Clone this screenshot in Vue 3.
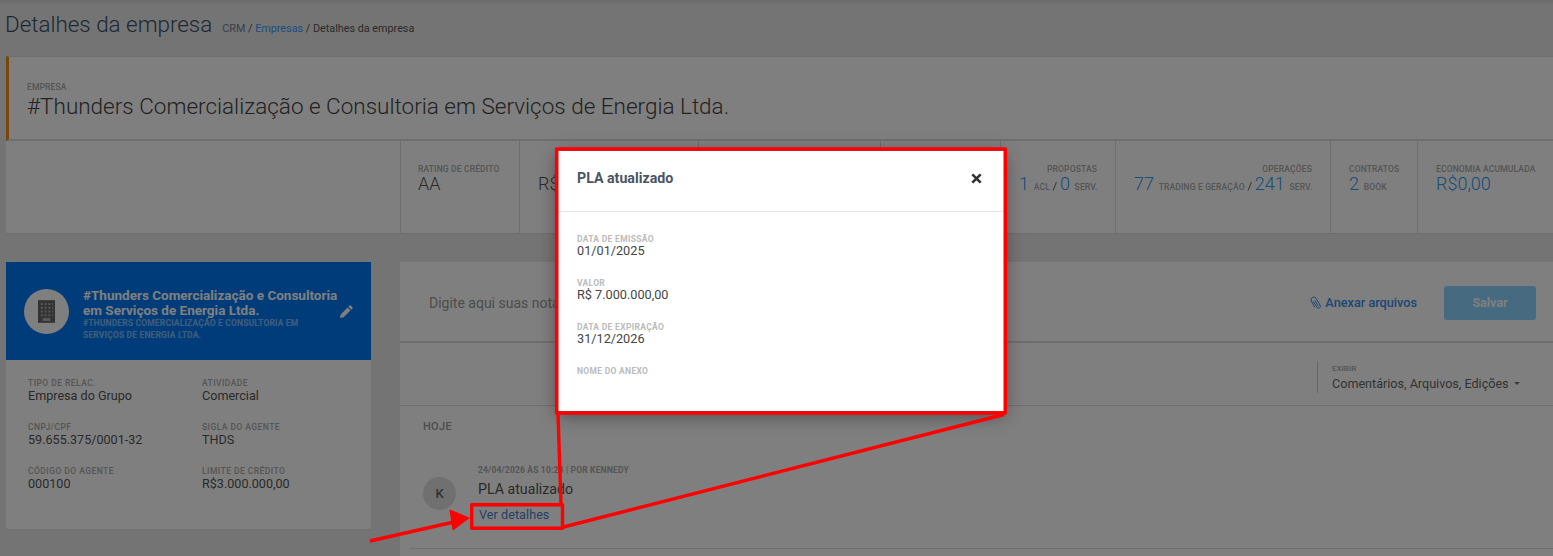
<script setup>
const sideFields = [
  ['TIPO DE RELAC.', 'Empresa do Grupo'], ['ATIVIDADE', 'Comercial'],
  ['CNPJ/CPF', '59.655.375/0001-32'], ['SIGLA DO AGENTE', 'THDS'],
  ['CÓDIGO DO AGENTE', '000100'], ['LIMITE DE CRÉDITO', 'R$3.000.000,00'],
]
const modalFields = [
  ['DATA DE EMISSÃO', '01/01/2025'], ['VALOR', 'R$ 7.000.000,00'],
  ['DATA DE EXPIRAÇÃO', '31/12/2026'], ['NOME DO ANEXO', ''],
]
</script>

<template>
  <div class="page">
    <header class="head">
      <h1>Detalhes da empresa</h1>
      <nav class="crumbs"><span class="c1">CRM</span> / <a>Empresas</a> / Detalhes da empresa</nav>
    </header>

    <section class="company">
      <div class="lbl">EMPRESA</div>
      <div class="cname">#Thunders Comercialização e Consultoria em Serviços de Energia Ltda.</div>
    </section>

    <section class="stats">
      <div class="cell c-rating"><div class="lbl">RATING DE CRÉDITO</div><div class="big">AA</div></div>
      <div class="cell c-limit"><div class="lbl">&nbsp;</div><div class="big">R$</div></div>
      <div class="cell c-a"></div>
      <div class="cell c-b"></div>
      <div class="cell c-prop right"><div class="lbl">PROPOSTAS</div><div class="num"><b>1</b> <small>ACL</small> / <b>0</b> <small>SERV.</small></div></div>
      <div class="cell c-op right"><div class="lbl">OPERAÇÕES</div><div class="num"><b>77</b> <small>TRADING E GERAÇÃO</small> / <b>241</b> <small>SERV.</small></div></div>
      <div class="cell c-con"><div class="lbl">CONTRATOS</div><div class="num"><b>2</b> <small>BOOK</small></div></div>
      <div class="cell c-eco"><div class="lbl">ECONOMIA ACUMULADA</div><div class="num"><b>R$0,00</b></div></div>
    </section>

    <div class="columns">
      <aside class="side">
        <div class="side-top">
          <div class="avatar">
            <svg width="17" height="23" viewBox="0 0 18 24"><path fill="#666" d="M0 0h18v24H0z"/><path fill="#fff" opacity=".5" d="M3 3h2v2H3zM7 3h2v2H7zM11 3h2v2h-2zM15 3h1v2h-1zM3 7h2v2H3zM7 7h2v2H7zM11 7h2v2h-2zM15 7h1v2h-1zM3 11h2v2H3zM7 11h2v2H7zM11 11h2v2h-2zM15 11h1v2h-1zM3 15h2v2H3zM7 15h2v2H7zM11 15h2v2h-2zM15 15h1v2h-1zM5 19h8v3H5z"/></svg>
          </div>
          <div class="side-titles">
            <div class="st">#Thunders Comercialização e Consultoria em Serviços de Energia Ltda.</div>
            <div class="ss">#THUNDERS COMERCIALIZAÇÃO E CONSULTORIA EM SERVIÇOS DE ENERGIA LTDA.</div>
          </div>
          <svg class="pencil" width="13" height="13" viewBox="0 0 14 14"><path fill="#fff" d="M10.2.6a1 1 0 0 1 1.4 0l1.8 1.8a1 1 0 0 1 0 1.4l-1.3 1.3-3.2-3.2zM8.1 2.7l3.2 3.2-7.4 7.4L0 14l.7-3.9z"/></svg>
        </div>
        <div class="side-grid">
          <div v-for="f in sideFields" :key="f[0]" class="sf">
            <div class="lbl">{{ f[0] }}</div>
            <div class="val">{{ f[1] }}</div>
          </div>
        </div>
      </aside>

      <main class="main">
        <div class="note">
          <span class="ph">Digite aqui suas notas</span>
          <a class="attach">
            <svg width="12" height="14" viewBox="0 0 12 14" fill="none" stroke="#3a8ee8" stroke-width="1"><path d="M3.2 5.2l3.6 6a1.9 1.9 0 0 0 3.3-1.9L6 2.2A2.8 2.8 0 0 0 1.2 5l3.6 6.3"/><path d="M5 4.6l3.3 5.6"/></svg>
            Anexar arquivos
          </a>
          <button class="save">Salvar</button>
        </div>
        <div class="filter">
          <div class="show">
            <div class="lbl">EXIBIR</div>
            <div class="show-val">Comentários, Arquivos, Edições <i class="caret"></i></div>
          </div>
        </div>
        <div class="feed">
          <div class="today">HOJE</div>
          <div class="item">
            <div class="k">K</div>
            <div class="item-body">
              <div class="meta">24/04/2026 ÀS 10:24 | POR KENNEDY</div>
              <div class="item-title">PLA atualizado</div>
              <a class="more">Ver detalhes</a>
            </div>
          </div>
        </div>
      </main>
    </div>

    <div class="overlay"></div>

    <div class="modal">
      <div class="m-head">
        <span class="m-title">PLA atualizado</span>
        <svg width="11" height="11" viewBox="0 0 11 11"><path d="M1.3 1.3l8.4 8.4M9.7 1.3L1.3 9.7" stroke="#333" stroke-width="2.6"/></svg>
      </div>
      <div class="m-body">
        <div v-for="f in modalFields" :key="f[0]" class="mf">
          <div class="lbl">{{ f[0] }}</div>
          <div class="m-val">{{ f[1] }}</div>
        </div>
      </div>
    </div>

    <svg class="marks" width="1553" height="556" viewBox="0 0 1553 556" fill="none" stroke="#f00" stroke-linejoin="round">
      <rect x="556.7" y="149" width="448.6" height="264" stroke-width="3.6"/>
      <rect x="471.7" y="504.7" width="90.8" height="23.6" stroke-width="3.4"/>
      <path d="M558 413l3 92M563.5 527L1004 414.5" stroke-width="3.4"/>
      <path d="M370 541l84-19" stroke-width="3.4"/>
      <path d="M469 518l-19-8 3 20z" fill="#f00" stroke-width="1"/>
    </svg>
  </div>
</template>

<style>
html, body { margin: 0; background: #e9e9e9; }
</style>

<style scoped>
.page {
  position: relative; width: 1553px; height: 556px; overflow: hidden;
  background: #e8e8e8; font-family: Roboto, "Liberation Sans", sans-serif; color: #555;
}
.head { display: flex; align-items: flex-start; gap: 10px; height: 56px; padding: 11px 0 0 5px; box-sizing: border-box; background: linear-gradient(#d6d6d6, #e8e8e8 5px); }
h1 { margin: 0; font-size: 22.4px; font-weight: 300; line-height: 26px; color: #3a5068; }
.crumbs { font-size: 10.8px; line-height: 13px; margin-top: 11px; color: #555; }
.crumbs .c1 { color: #6f8296; }
.crumbs a { color: #3a9dff; }
.lbl { font-size: 8.5px; font-weight: 500; letter-spacing: .15px; line-height: 10px; color: #aaa; white-space: nowrap; }
.company {
  margin-left: 6px; height: 85px; box-sizing: border-box; padding: 25px 0 0 18px;
  background: #fff; border-left: 3px solid #f08a14; border-bottom: 2px solid #ddd; border-top: 1px solid #ddd;
}
.cname { font-size: 22.5px; font-weight: 300; line-height: 30px; color: #444; margin-top: -1px; }
.stats { margin-left: 6px; height: 93px; display: flex; justify-content: flex-end; background: #fff; border-bottom: 1px solid #ddd; box-sizing: border-box; }
.cell { box-sizing: border-box; padding: 23px 18px 0; border-left: 1px solid #ddd; }
.right { text-align: right; }
.c-rating { width: 119px; padding-left: 17px; }
.c-limit { width: 179px; }
.c-a { width: 182px; }
.c-b { width: 120px; }
.c-prop { width: 115px; }
.c-op { width: 215px; }
.c-con { width: 87px; }
.c-eco { width: 136px; }
.big { font-size: 18px; font-weight: 300; line-height: 20px; color: #555; }
.num { font-size: 11px; line-height: 20px; color: #555; white-space: nowrap; }
.num b { font-size: 18px; font-weight: 300; color: #2a9cf0; }
.num small { font-size: 8.5px; font-weight: 500; letter-spacing: .15px; color: #aaa; margin-left: 2px; }
.columns { display: flex; gap: 29px; margin: 28px 0 0 6px; align-items: flex-start; }
.side { width: 365px; height: 267px; background: #fff; border-radius: 2px; box-shadow: 0 1px 1px #ddd; flex: none; }
.side .lbl { letter-spacing: .45px; }
.side-top { height: 98px; background: #0079f2; display: flex; align-items: center; padding-left: 18px; position: relative; box-sizing: border-box; }
.avatar { width: 45px; height: 45px; border-radius: 50%; background: #fff; display: flex; align-items: center; justify-content: center; flex: none; }
.side-titles { margin-left: 14px; width: 257px; color: #fff; }
.st { font-size: 13.5px; font-weight: 700; line-height: 15px; margin-top: 7px; }
.ss { font-size: 8.5px; font-weight: 700; letter-spacing: .155px; line-height: 12px; opacity: .5; margin-top: -1px; max-width: 225px; }
.pencil { flex: none; margin-top: 1px; }
.side-grid { display: grid; grid-template-columns: 174px 1fr; row-gap: 17px; padding: 18px 0 0 22px; }
.sf .val { font-size: 12.6px; line-height: 16px; color: #555; margin-top: 0; }
.sf { height: 27px; }
.main { flex: 1; background: #fff; height: 300px; box-shadow: 0 1px 1px #ddd; }
.note { height: 81px; display: flex; align-items: center; padding: 2px 17px 0 29px; box-sizing: border-box; border-bottom: 2px solid #ddd; }
.ph { font-size: 14px; color: #999; flex: 1; }
.attach { font-size: 12.7px; font-weight: 500; color: #3a8ee8; display: flex; align-items: center; gap: 3px; }
.save { margin-left: 27px; width: 92px; height: 34px; border: 0; border-radius: 3px; background: #8cd4ff; color: #fff; font: 700 12.5px Roboto, sans-serif; }
.filter { height: 61px; margin-top: 2px; display: flex; justify-content: flex-end; align-items: center; border-bottom: 1px solid #ddd; box-sizing: border-box; padding-top: 3px; }
.show { width: 236px; height: 32px; box-sizing: border-box; border-left: 1px solid #ccc; padding: 3px 0 0 14px; }
.show .lbl { font-size: 8px; letter-spacing: 0; }
.show-val { font-size: 12.6px; line-height: 16px; color: #666; margin-top: 2px; display: flex; align-items: center; gap: 5px; }
.caret { width: 0; height: 0; border: 3.5px solid transparent; border-top-color: #777; border-bottom: 0; }
.feed { padding: 14px 0 0 23px; }
.today { font-size: 11px; font-weight: 500; letter-spacing: .3px; color: #999; line-height: 13px; }
.item { display: flex; margin-top: 32px; padding-bottom: 25px; margin-left: -13px; border-bottom: 1px solid #ddd; padding-left: 13px; }
.k { width: 33px; height: 33px; border-radius: 50%; background: #e0e0e0; color: #666; font-size: 13px; font-weight: 500; display: flex; align-items: center; justify-content: center; margin-top: 12px; flex: none; }
.item-body { margin-left: 22px; }
.meta { font-size: 8.5px; font-weight: 700; letter-spacing: .17px; line-height: 10px; color: #aaa; }
.item-title { font-size: 14.2px; color: #555; line-height: 18px; margin-top: 5px; }
.more { display: block; font-size: 12.5px; font-weight: 400; color: #4a80c8; line-height: 16px; margin: 9px 0 0 1px; letter-spacing: .1px; }
.overlay { position: absolute; inset: 0; background: rgba(0,0,0,.5); }
.modal { position: absolute; left: 558px; top: 151px; width: 446px; height: 260px; background: #fff; box-shadow: 0 4px 18px rgba(0,0,0,.45); }
.m-head { height: 61px; box-sizing: border-box; border-bottom: 1px solid #e5e5e5; display: flex; justify-content: space-between; padding: 19px 22px 0 19px; }
.m-title { font-size: 14.2px; font-weight: 700; line-height: 16px; color: #4a5560; }
.m-head svg { margin-top: 3px; }
.m-body { padding: 23px 19px 0; }
.mf { height: 44px; }
.m-val { font-size: 12.7px; line-height: 15px; color: #444; }
.modal .lbl { line-height: 9px; color: #bbb; font-weight: 700; letter-spacing: .3px; height: 8px; }
.marks { position: absolute; left: 0; top: 0; }
</style>
